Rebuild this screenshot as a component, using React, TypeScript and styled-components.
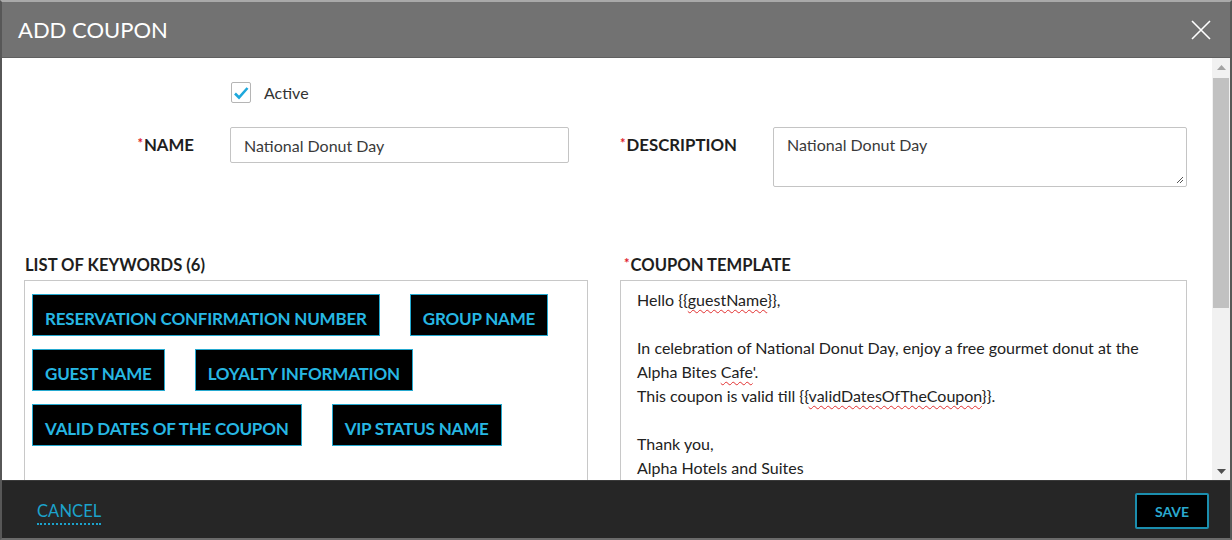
import React from "react";
import styled, { createGlobalStyle } from "styled-components";

const Global = createGlobalStyle`
  html, body { margin: 0; padding: 0; background: #ffffff; }
  body { font-family: Lato, "Open Sans", "Liberation Sans", sans-serif; }
  * { box-sizing: border-box; }
`;

const Frame = styled.div`
  width: 1232px;
  height: 540px;
  display: flex;
  flex-direction: column;
  border-left: 2px solid #575757;
  border-right: 2px solid #575757;
  border-top: 2px solid #a9a9a9;
  border-bottom: 2px solid #6a6a6a;
  overflow: hidden;
  background: #fff;
`;

const Header = styled.div`
  height: 56px;
  flex: none;
  background: #727272;
  border-bottom: 1px solid #606060;
  display: flex;
  align-items: center;
  justify-content: space-between;
  padding: 0 18px 0 16px;
`;

const Title = styled.h1`
  margin: 0;
  font-size: 22px;
  font-weight: 400;
  color: #ffffff;
  letter-spacing: 0;
`;

const CloseButton = styled.button`
  background: none;
  border: none;
  padding: 0;
  width: 22px;
  height: 22px;
  display: flex;
  cursor: pointer;
`;

const Body = styled.div`
  flex: 1;
  display: flex;
  min-height: 0;
  overflow: hidden;
`;

const Content = styled.div`
  flex: 1;
  padding: 24px 0 0 22px;
  display: flex;
  flex-direction: column;
`;

const TopGrid = styled.div`
  display: grid;
  grid-template-columns: 564px 567px;
  column-gap: 32px;
`;

const LeftField = styled.div`
  display: grid;
  grid-template-columns: 170px 339px;
  column-gap: 36px;
  align-items: start;
`;

const RightField = styled.div`
  display: grid;
  grid-template-columns: 153px 414px;
  align-items: start;
`;

const ActiveRow = styled.label`
  grid-column: 2;
  display: flex;
  align-items: center;
  gap: 13px;
  height: 21px;
  margin-left: 1px;
  margin-bottom: 24px;
  font-size: 16px;
  color: #333333;
`;

const CheckBox = styled.span`
  width: 20px;
  height: 21px;
  border: 1px solid #b5b5b5;
  border-radius: 2px;
  background: #fff;
  display: flex;
  align-items: center;
  justify-content: center;
`;

const Label = styled.div<{ $align?: "left" | "right" }>`
  font-size: 16.8px;
  font-weight: 700;
  color: #1e1e1e;
  text-align: ${(p) => p.$align ?? "left"};
  padding-top: 8px;
  line-height: 20px;
  white-space: nowrap;
`;

const Star = styled.span`
  color: #e0202a;
  font-size: 13px;
  line-height: 0;
  vertical-align: 3px;
  margin-right: 1px;
`;

const TextInput = styled.div`
  height: 36px;
  border: 1px solid #c4c4c4;
  border-radius: 2px;
  padding: 0 13px;
  display: flex;
  align-items: center;
  font-size: 16px;
  color: #3a3a3a;
`;

const TextArea = styled.div`
  position: relative;
  height: 60px;
  border: 1px solid #c4c4c4;
  border-radius: 2px;
  padding: 7px 13px;
  font-size: 16px;
  line-height: 20px;
  color: #3a3a3a;
`;

const Grip = styled.svg`
  position: absolute;
  right: 2px;
  bottom: 2px;
`;

const LowerGrid = styled.div`
  display: grid;
  grid-template-columns: 564px 567px;
  column-gap: 32px;
  margin-top: 68px;
`;

const Section = styled.div`
  display: flex;
  flex-direction: column;
`;

const SectionLabel = styled.div<{ $indent?: number }>`
  font-size: 16.6px;
  font-weight: 700;
  color: #1e1e1e;
  line-height: 20px;
  height: 20px;
  margin: 0 0 5px ${(p) => p.$indent ?? 0}px;
  white-space: nowrap;
`;

const KeywordBox = styled.div`
  height: 240px;
  border: 1px solid #c8c8c8;
  padding: 13px 7px;
  display: flex;
  flex-wrap: wrap;
  align-content: flex-start;
  column-gap: 30px;
  row-gap: 13px;
`;

const Chip = styled.button`
  height: 42px;
  background: #000000;
  border: 1px solid #25a9d0;
  color: #27b7e3;
  font-family: Lato, "Open Sans", "Liberation Sans", sans-serif;
  font-size: 17px;
  font-weight: 700;
  letter-spacing: -0.2px;
  padding: 7px 12px 0 12px;
  cursor: pointer;
`;

const TemplateBox = styled.div`
  height: 240px;
  border: 1px solid #c8c8c8;
  padding: 7px 16px;
  font-size: 16px;
  line-height: 24px;
  color: #222222;
`;

const Line = styled.div`
  min-height: 24px;
`;

const Misspelled = styled.span`
  text-decoration: underline wavy #e23030;
  text-decoration-thickness: 1px;
  text-underline-offset: 3px;
`;

const ScrollTrack = styled.div`
  width: 18px;
  flex: none;
  background: #f1f1f1;
  display: flex;
  flex-direction: column;
  align-items: stretch;
`;

const ScrollArrow = styled.div`
  height: 18px;
  display: flex;
  align-items: center;
  justify-content: center;
`;

const ScrollThumb = styled.div`
  height: 230px;
  margin: 2px 1px 0 1px;
  background: #c1c1c1;
`;

const ScrollSpacer = styled.div`
  flex: 1;
`;

const Footer = styled.div`
  height: 58px;
  flex: none;
  background: #262626;
  border-top: 1px solid #3a3a3a;
  display: flex;
  align-items: center;
  justify-content: space-between;
  padding: 0 21px 0 35px;
`;

const CancelLink = styled.button`
  background: none;
  border: none;
  padding: 0 0 2px 0;
  color: #1ca3cc;
  font-family: Lato, "Open Sans", "Liberation Sans", sans-serif;
  font-size: 16.5px;
  font-weight: 400;
  letter-spacing: 0.1px;
  border-bottom: 2px dotted #1ca3cc;
  cursor: pointer;
  margin-top: 6px;
`;

const SaveButton = styled.button`
  width: 74px;
  height: 36px;
  background: #000000;
  border: 2px solid #1b8eae;
  border-radius: 2px;
  color: #2aa9cf;
  font-family: Lato, "Open Sans", "Liberation Sans", sans-serif;
  font-size: 14px;
  font-weight: 700;
  padding-top: 2px;
  cursor: pointer;
  margin-top: 2px;
`;

const keywords = [
  "RESERVATION CONFIRMATION NUMBER",
  "GROUP NAME",
  "GUEST NAME",
  "LOYALTY INFORMATION",
  "VALID DATES OF THE COUPON",
  "VIP STATUS NAME",
];

export default function App() {
  return (
    <>
      <Global />
      <Frame>
        <Header>
          <Title>ADD COUPON</Title>
          <CloseButton aria-label="Close">
            <svg width="22" height="22" viewBox="0 0 22 22">
              <path d="M2 2 L20 20 M20 2 L2 20" stroke="#ffffff" strokeWidth="1.6" fill="none" />
            </svg>
          </CloseButton>
        </Header>
        <Body>
          <Content>
            <TopGrid>
              <LeftField>
                <ActiveRow>
                  <CheckBox>
                    <svg width="16" height="14" viewBox="0 0 16 14">
                      <path d="M2 7.5 L6 11.5 L14.5 2" stroke="#1ea8dc" strokeWidth="2.6" fill="none" />
                    </svg>
                  </CheckBox>
                  Active
                </ActiveRow>
              </LeftField>
              <div />
              <LeftField>
                <Label $align="right">
                  <Star>*</Star>NAME
                </Label>
                <TextInput>National Donut Day</TextInput>
              </LeftField>
              <RightField>
                <Label>
                  <Star>*</Star>DESCRIPTION
                </Label>
                <TextArea>
                  National Donut Day
                  <Grip width="9" height="9" viewBox="0 0 9 9">
                    <path d="M8 2 L2 8 M8 5 L5 8" stroke="#555" strokeWidth="1" />
                  </Grip>
                </TextArea>
              </RightField>
            </TopGrid>
            <LowerGrid>
              <Section>
                <SectionLabel $indent={1}>LIST OF KEYWORDS (6)</SectionLabel>
                <KeywordBox>
                  {keywords.map((k) => (
                    <Chip key={k}>{k}</Chip>
                  ))}
                </KeywordBox>
              </Section>
              <Section>
                <SectionLabel $indent={4}>
                  <Star>*</Star>COUPON TEMPLATE
                </SectionLabel>
                <TemplateBox>
                  <Line>
                    Hello {"{{"}
                    <Misspelled>guestName</Misspelled>
                    {"}}"},
                  </Line>
                  <Line />
                  <Line>In celebration of National Donut Day, enjoy a free gourmet donut at the</Line>
                  <Line>
                    Alpha Bites <Misspelled>Cafe</Misspelled>'.
                  </Line>
                  <Line>
                    This coupon is valid till {"{{"}
                    <Misspelled>validDatesOfTheCoupon</Misspelled>
                    {"}}"}.
                  </Line>
                  <Line />
                  <Line>Thank you,</Line>
                  <Line>Alpha Hotels and Suites</Line>
                </TemplateBox>
              </Section>
            </LowerGrid>
          </Content>
          <ScrollTrack>
            <ScrollArrow>
              <svg width="9" height="5" viewBox="0 0 9 5">
                <path d="M0 5 L4.5 0 L9 5 Z" fill="#a3a3a3" />
              </svg>
            </ScrollArrow>
            <ScrollThumb />
            <ScrollSpacer />
            <ScrollArrow>
              <svg width="9" height="5" viewBox="0 0 9 5">
                <path d="M0 0 L4.5 5 L9 0 Z" fill="#505050" />
              </svg>
            </ScrollArrow>
          </ScrollTrack>
        </Body>
        <Footer>
          <CancelLink>CANCEL</CancelLink>
          <SaveButton>SAVE</SaveButton>
        </Footer>
      </Frame>
    </>
  );
}
